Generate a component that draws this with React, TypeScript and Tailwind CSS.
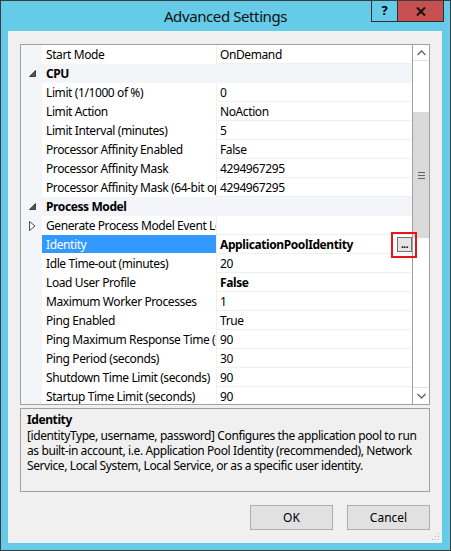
import React from 'react';

type Row = {
  name: string;
  value?: string;
  category?: boolean;
  bold?: boolean;
  selected?: boolean;
  collapsed?: boolean;
};

const rows: Row[] = [
  { name: 'Start Mode', value: 'OnDemand' },
  { name: 'CPU', category: true },
  { name: 'Limit (1/1000 of %)', value: '0' },
  { name: 'Limit Action', value: 'NoAction' },
  { name: 'Limit Interval (minutes)', value: '5' },
  { name: 'Processor Affinity Enabled', value: 'False' },
  { name: 'Processor Affinity Mask', value: '4294967295' },
  { name: 'Processor Affinity Mask (64-bit option)', value: '4294967295' },
  { name: 'Process Model', category: true },
  { name: 'Generate Process Model Event Log Entry', value: '', collapsed: true },
  { name: 'Identity', value: 'ApplicationPoolIdentity', bold: true, selected: true },
  { name: 'Idle Time-out (minutes)', value: '20' },
  { name: 'Load User Profile', value: 'False', bold: true },
  { name: 'Maximum Worker Processes', value: '1' },
  { name: 'Ping Enabled', value: 'True' },
  { name: 'Ping Maximum Response Time (seconds)', value: '90' },
  { name: 'Ping Period (seconds)', value: '30' },
  { name: 'Shutdown Time Limit (seconds)', value: '90' },
  { name: 'Startup Time Limit (seconds)', value: '90' },
];

const font = { fontFamily: '"Segoe UI", "Noto Sans", "Open Sans", sans-serif' };

const Expanded = () => (
  <svg width="7" height="7" viewBox="0 0 7 7">
    <polygon points="6.5,0.5 6.5,6.5 0.5,6.5" fill="#5a5a5a" stroke="#3c3c3c" strokeWidth="1" />
  </svg>
);

const Collapsed = () => (
  <svg width="7" height="10" viewBox="0 0 7 10">
    <polygon points="0.5,0.5 6,5 0.5,9.5" fill="#ffffff" stroke="#4a4a4a" strokeWidth="1" />
  </svg>
);

const PropRow = ({ row }: { row: Row }) => {
  if (row.category) {
    return (
      <div className="flex h-[19px] shrink-0 bg-[#f3f5f9]">
        <div className="w-[21px] shrink-0 flex items-center justify-center pl-[2px]">
          <Expanded />
        </div>
        <div className="flex-1 pl-[4px] pt-px flex items-center text-[12px] font-bold text-black tracking-[-0.4px]">{row.name}</div>
      </div>
    );
  }
  return (
    <div className="flex h-[19px] shrink-0">
      <div className="w-[21px] shrink-0 bg-[#f3f5f9] flex items-center justify-center pl-[2px]">
        {row.collapsed && <Collapsed />}
      </div>
      <div
        className={
          row.selected
            ? 'w-[174px] shrink-0 bg-[#3399ff] text-white pl-[4px] pt-px h-[18px] flex items-center overflow-hidden whitespace-nowrap text-[12px] tracking-[-0.4px]'
            : 'w-[174px] shrink-0 bg-white text-black pl-[4px] pt-px h-[18px] flex items-center overflow-hidden whitespace-nowrap text-[12px] tracking-[-0.4px]'
        }
      >
        {row.name}
      </div>
      <div className="w-px shrink-0 bg-[#f0f0f0]" />
      <div className="flex-1 flex flex-col">
        <div
          className={
            row.bold
              ? 'h-[18px] bg-white pl-[3px] flex items-center font-bold text-[12px] text-black whitespace-nowrap tracking-[-0.4px]'
              : 'h-[18px] bg-white pl-[3px] flex items-center text-[12px] text-black whitespace-nowrap tracking-[-0.4px]'
          }
        >
          <span className="flex-1 pt-px">{row.value}</span>
          {row.selected && (
            <div className="mt-[2px] self-start w-[15px] h-[15px] border border-[#707070] bg-[#e6e6e6] flex items-end justify-center pb-[2px]">
              <span className="text-[10px] leading-none font-bold tracking-[-0.5px] text-black">...</span>
            </div>
          )}
        </div>
        <div className="h-px bg-[#f0f0f0]" />
      </div>
    </div>
  );
};

export default function App() {
  return (
    <div className="w-[451px] h-[551px] bg-[#65cbe9] border border-[#3d3d3d] flex flex-col" style={font}>
      {/* Title bar */}
      <div className="h-[30px] shrink-0 grid grid-cols-[1fr_auto_1fr]">
        <div />
        <div className="text-[15px] text-[#111] pt-[4px] tracking-[-0.4px]">Advanced Settings</div>
        <div className="flex justify-end items-start pr-[6px]">
          <div className="w-[27px] h-[21px] border border-[#2f2f2f] border-t-0 flex items-center justify-center text-[13px] font-bold text-black">?</div>
          <div className="w-[46px] h-[21px] bg-[#c75050] border border-[#2f2f2f] border-t-0 border-l-0 flex items-center justify-center">
            <svg width="10" height="9" viewBox="0 0 10 9">
              <path d="M1 0.5 L9 8.5 M9 0.5 L1 8.5" stroke="#111" strokeWidth="2" />
            </svg>
          </div>
        </div>
      </div>

      {/* Client area */}
      <div className="ml-[7px] mr-[8px] mb-[7px] flex-1 bg-[#f0f0f0] flex flex-col px-[12px] pt-[13px]">
        {/* Property grid */}
        <div className="relative h-[361px] shrink-0 border border-[#a0a0a0] bg-white flex">
          <div className="flex-1 flex flex-col overflow-hidden">
            {rows.map((r, i) => (
              <PropRow key={i} row={r} />
            ))}
          </div>
          <div className="w-[17px] shrink-0 border-l border-[#a0a0a0] flex flex-col bg-white">
            <div className="h-[16px] shrink-0 border-b border-[#e0e0e0] flex items-center justify-center">
              <svg width="9" height="6" viewBox="0 0 9 6">
                <path d="M0.5 5 L4.5 1 L8.5 5" fill="none" stroke="#606060" strokeWidth="1.3" />
              </svg>
            </div>
            <div className="h-[51px] shrink-0" />
            <div className="h-[126px] shrink-0 bg-[#dadada] flex flex-col items-center justify-center gap-[2px]">
              <div className="w-[7px] h-px bg-[#606060]" />
              <div className="w-[7px] h-px bg-[#606060]" />
              <div className="w-[7px] h-px bg-[#606060]" />
            </div>
            <div className="flex-1" />
            <div className="h-[17px] shrink-0 border-t border-[#e0e0e0] flex items-center justify-center">
              <svg width="9" height="6" viewBox="0 0 9 6">
                <path d="M0.5 1 L4.5 5 L8.5 1" fill="none" stroke="#606060" strokeWidth="1.3" />
              </svg>
            </div>
          </div>
          {/* highlight marker around the ellipsis button */}
          <div className="absolute left-[370px] top-[187px] w-[26px] h-[26px] border-2 border-[#e8141b]" />
        </div>

        {/* Description */}
        <div className="mt-[3px] h-[84px] shrink-0 border border-[#a0a0a0] bg-[#f0f0f0] px-[6px] pt-[2px] text-[12px] leading-[15px] text-black tracking-[-0.4px]">
          <div className="font-bold leading-[17px]">Identity</div>
          <div>
            [identityType, username, password] Configures the application pool to run as built-in account, i.e.
            Application Pool Identity (recommended), Network Service, Local System, Local Service, or as a specific
            user identity.
          </div>
        </div>

        {/* Buttons */}
        <div className="flex justify-end gap-[14px] mt-[13px]">
          <button className="w-[83px] h-[25px] border border-[#adadad] bg-[#e1e1e1] text-[12px] text-black">OK</button>
          <button className="w-[83px] h-[25px] border border-[#adadad] bg-[#e1e1e1] text-[12px] text-black">Cancel</button>
        </div>
        <div className="flex-1 flex justify-end items-end pb-[2px] mr-[-10px]">
          <svg width="9" height="9" viewBox="0 0 9 9">
            <rect x="7" y="1" width="1" height="1" fill="#b0b0b0" />
            <rect x="4" y="4" width="1" height="1" fill="#b0b0b0" />
            <rect x="7" y="4" width="1" height="1" fill="#b0b0b0" />
            <rect x="1" y="7" width="1" height="1" fill="#b0b0b0" />
            <rect x="4" y="7" width="1" height="1" fill="#b0b0b0" />
            <rect x="7" y="7" width="1" height="1" fill="#b0b0b0" />
          </svg>
        </div>
      </div>
    </div>
  );
}
